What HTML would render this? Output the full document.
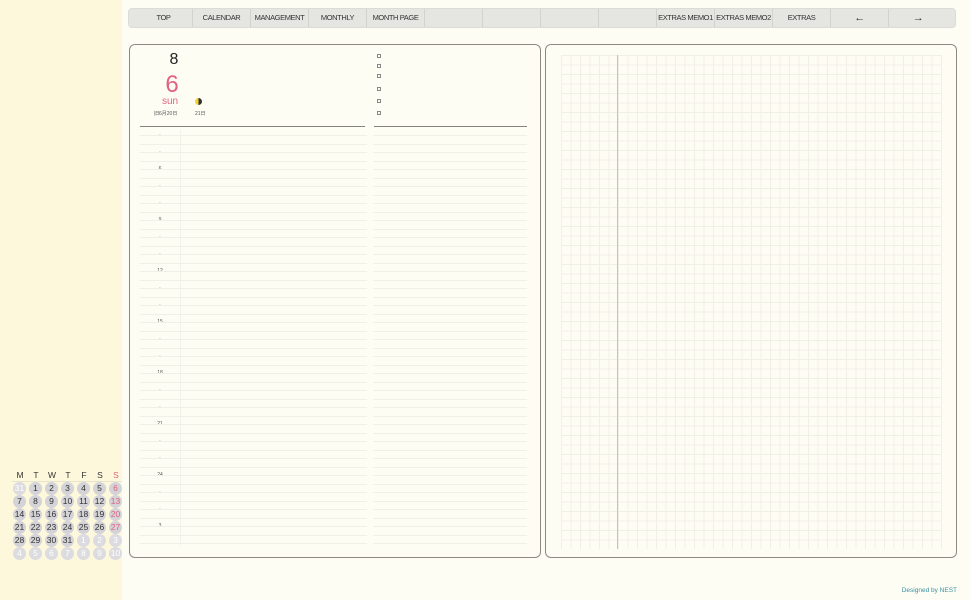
<!DOCTYPE html>
<html><head><meta charset="utf-8"><style>
*{margin:0;padding:0;box-sizing:border-box}
body{width:970px;height:600px;background:#fefdf4;font-family:"Liberation Sans","Noto Sans CJK JP",sans-serif;position:relative;overflow:hidden;color:#333}
.side{position:absolute;left:0;top:0;width:122px;height:600px;background:#fdf8dc}
.nav{position:absolute;left:128px;top:8px;width:828px;height:20px;background:#e5e5e1;border-radius:4px;border:1px solid #dcdcd6}
.nav div{position:absolute;top:0;height:18px;width:58px;border-right:1px solid #d3d3cd;font-size:7.5px;line-height:18px;text-align:center;color:#333;white-space:nowrap;letter-spacing:-0.4px}
.panel{position:absolute;top:44px;height:514px;border:1.5px solid #8d8a84;border-radius:6px;background:#fefdf4}
.hl{position:absolute;height:1px;background:#86837e}
.row{position:absolute;left:140px;width:387px;height:1px;background:#f1f0e8}
.hr{position:absolute;left:150px;width:20px;font-size:5px;text-align:center;color:#555}
.cb{position:absolute;left:377px;width:4px;height:4px;border:0.7px solid #888}
.cal{position:absolute;font-size:8.5px;text-align:center;width:14px}
.c{position:absolute;width:13px;height:13px;border-radius:50%;background:#d3d3d8;font-size:8.5px;line-height:13px;text-align:center;color:#333}
.f{color:#fff;background:#dcdce0}
.grid{position:absolute;left:561px;top:55px;width:381px;height:494px;
background-image:repeating-linear-gradient(to right,#f1f0e7 0 1px,transparent 1px 9.5px),repeating-linear-gradient(to bottom,#f1f0e7 0 1px,transparent 1px 9.5px)}
</style></head><body>
<div class="side"></div>
<div class="nav">
<div style="left:6px">TOP</div><div style="left:64px">CALENDAR</div><div style="left:122px">MANAGEMENT</div><div style="left:180px">MONTHLY</div><div style="left:238px">MONTH PAGE</div><div style="left:296px"></div><div style="left:354px"></div><div style="left:412px"></div><div style="left:470px"></div><div style="left:528px">EXTRAS MEMO1</div><div style="left:586px">EXTRAS MEMO2</div><div style="left:644px">EXTRAS</div><div style="left:702px;font-size:11px">&larr;</div><div style="left:760px;font-size:11px;border-right:none">&rarr;</div>
</div>
<div class="panel" style="left:129px;width:412px"></div>
<div class="panel" style="left:545px;width:412px"></div>
<div class="grid"></div>
<div style="position:absolute;left:617px;top:55px;width:1px;height:494px;background:#c4c2ba"></div>

<div style="position:absolute;left:164px;top:51px;width:20px;text-align:center;font-size:16px;color:#222">8</div>
<div style="position:absolute;left:160px;top:71px;width:24px;text-align:center;font-size:24px;color:#e0627f">6</div>
<div style="position:absolute;left:158px;top:96px;width:24px;text-align:center;font-size:10px;color:#e0627f">sun</div>
<div style="position:absolute;left:154px;top:110px;font-size:5px;color:#555">旧6月20日</div>
<div style="position:absolute;left:195px;top:98px;width:7px;height:7px;border-radius:50%;background:linear-gradient(to right,#f2d43a 50%,#333 50%)"></div>
<div style="position:absolute;left:195px;top:110px;font-size:5px;color:#555">21日</div>
<div class="cb" style="top:54px"></div><div class="cb" style="top:64px"></div><div class="cb" style="top:74px"></div><div class="cb" style="top:87px"></div><div class="cb" style="top:99px"></div><div class="cb" style="top:111px"></div>
<div class="hl" style="left:140px;top:126px;width:225px"></div>
<div class="hl" style="left:374px;top:126px;width:153px"></div>
<div style="position:absolute;left:180px;top:130px;width:1px;height:415px;background:#f2f1e9"></div>
<div style="position:absolute;left:367px;top:126px;width:6px;height:420px;background:#fefdf4;z-index:2"></div>
<div class="hr" style="top:132px">·</div><div class="hr" style="top:149px">·</div><div class="hr" style="top:166px">6</div><div class="hr" style="top:183px">·</div><div class="hr" style="top:200px">·</div><div class="hr" style="top:217px">9</div><div class="hr" style="top:234px">·</div><div class="hr" style="top:251px">·</div><div class="hr" style="top:268px">12</div><div class="hr" style="top:285px">·</div><div class="hr" style="top:302px">·</div><div class="hr" style="top:319px">15</div><div class="hr" style="top:336px">·</div><div class="hr" style="top:353px">·</div><div class="hr" style="top:370px">18</div><div class="hr" style="top:387px">·</div><div class="hr" style="top:404px">·</div><div class="hr" style="top:421px">21</div><div class="hr" style="top:438px">·</div><div class="hr" style="top:455px">·</div><div class="hr" style="top:472px">24</div><div class="hr" style="top:489px">·</div><div class="hr" style="top:506px">·</div><div class="hr" style="top:523px">3</div>
<div class="row" style="top:135px"></div><div class="row" style="top:143.5px"></div><div class="row" style="top:152px"></div><div class="row" style="top:160.5px"></div><div class="row" style="top:169px"></div><div class="row" style="top:177.5px"></div><div class="row" style="top:186px"></div><div class="row" style="top:194.5px"></div><div class="row" style="top:203px"></div><div class="row" style="top:211.5px"></div><div class="row" style="top:220px"></div><div class="row" style="top:228.5px"></div><div class="row" style="top:237px"></div><div class="row" style="top:245.5px"></div><div class="row" style="top:254px"></div><div class="row" style="top:262.5px"></div><div class="row" style="top:271px"></div><div class="row" style="top:279.5px"></div><div class="row" style="top:288px"></div><div class="row" style="top:296.5px"></div><div class="row" style="top:305px"></div><div class="row" style="top:313.5px"></div><div class="row" style="top:322px"></div><div class="row" style="top:330.5px"></div><div class="row" style="top:339px"></div><div class="row" style="top:347.5px"></div><div class="row" style="top:356px"></div><div class="row" style="top:364.5px"></div><div class="row" style="top:373px"></div><div class="row" style="top:381.5px"></div><div class="row" style="top:390px"></div><div class="row" style="top:398.5px"></div><div class="row" style="top:407px"></div><div class="row" style="top:415.5px"></div><div class="row" style="top:424px"></div><div class="row" style="top:432.5px"></div><div class="row" style="top:441px"></div><div class="row" style="top:449.5px"></div><div class="row" style="top:458px"></div><div class="row" style="top:466.5px"></div><div class="row" style="top:475px"></div><div class="row" style="top:483.5px"></div><div class="row" style="top:492px"></div><div class="row" style="top:500.5px"></div><div class="row" style="top:509px"></div><div class="row" style="top:517.5px"></div><div class="row" style="top:526px"></div><div class="row" style="top:534.5px"></div><div class="row" style="top:543px"></div>

<div class="cal" style="left:13px;top:470px">M</div><div class="cal" style="left:29px;top:470px">T</div><div class="cal" style="left:45px;top:470px">W</div><div class="cal" style="left:61px;top:470px">T</div><div class="cal" style="left:77px;top:470px">F</div><div class="cal" style="left:93px;top:470px">S</div><div class="cal" style="left:109px;top:470px;color:#e0627f">S</div>
<div style="position:absolute;left:12px;top:481px;width:110px;height:1px;background:#e8e4cc"></div>

<div class="c f" style="left:13px;top:482px">31</div><div class="c" style="left:29px;top:482px">1</div><div class="c" style="left:45px;top:482px">2</div><div class="c" style="left:61px;top:482px">3</div><div class="c" style="left:77px;top:482px">4</div><div class="c" style="left:93px;top:482px">5</div><div class="c" style="left:109px;top:482px;color:#e0627f">6</div>
<div class="c" style="left:13px;top:495px">7</div><div class="c" style="left:29px;top:495px">8</div><div class="c" style="left:45px;top:495px">9</div><div class="c" style="left:61px;top:495px">10</div><div class="c" style="left:77px;top:495px">11</div><div class="c" style="left:93px;top:495px">12</div><div class="c" style="left:109px;top:495px;color:#e0627f">13</div>
<div class="c" style="left:13px;top:508px">14</div><div class="c" style="left:29px;top:508px">15</div><div class="c" style="left:45px;top:508px">16</div><div class="c" style="left:61px;top:508px">17</div><div class="c" style="left:77px;top:508px">18</div><div class="c" style="left:93px;top:508px">19</div><div class="c" style="left:109px;top:508px;color:#e0627f">20</div>
<div class="c" style="left:13px;top:521px">21</div><div class="c" style="left:29px;top:521px">22</div><div class="c" style="left:45px;top:521px">23</div><div class="c" style="left:61px;top:521px">24</div><div class="c" style="left:77px;top:521px">25</div><div class="c" style="left:93px;top:521px">26</div><div class="c" style="left:109px;top:521px;color:#e0627f">27</div>
<div class="c" style="left:13px;top:534px">28</div><div class="c" style="left:29px;top:534px">29</div><div class="c" style="left:45px;top:534px">30</div><div class="c" style="left:61px;top:534px">31</div><div class="c f" style="left:77px;top:534px">1</div><div class="c f" style="left:93px;top:534px">2</div><div class="c f" style="left:109px;top:534px">3</div>
<div class="c f" style="left:13px;top:547px">4</div><div class="c f" style="left:29px;top:547px">5</div><div class="c f" style="left:45px;top:547px">6</div><div class="c f" style="left:61px;top:547px">7</div><div class="c f" style="left:77px;top:547px">8</div><div class="c f" style="left:93px;top:547px">9</div><div class="c f" style="left:109px;top:547px">10</div>

<div style="position:absolute;left:880px;top:587px;width:77px;text-align:right;font-size:6.5px;color:#3a8fa0">Designed by NEST</div>
</body></html>
